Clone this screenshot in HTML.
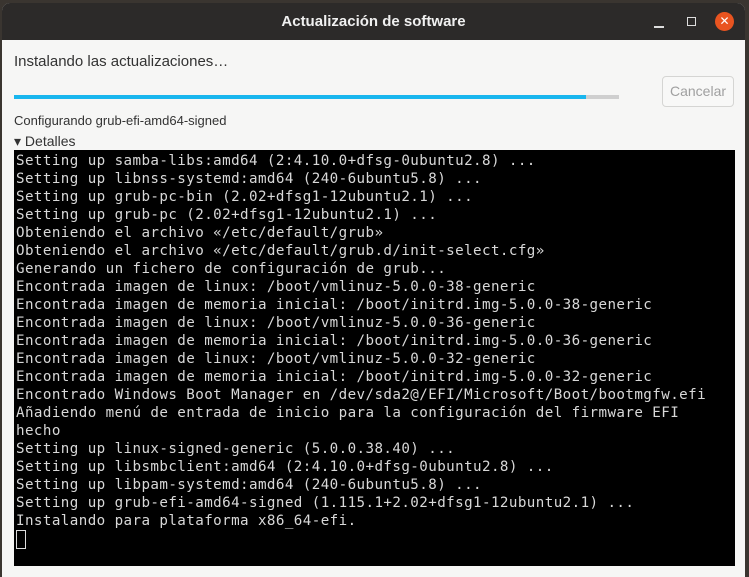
<!DOCTYPE html>
<html><head><meta charset="utf-8"><style>
*{margin:0;padding:0;box-sizing:border-box}
body{width:749px;height:577px;background:#3a3530;position:relative;overflow:hidden;font-family:"Liberation Sans","DejaVu Sans",sans-serif}
.win{position:absolute;left:2px;top:3px;width:743px;height:574px;background:#f6f6f5;border-radius:8px 8px 0 0;overflow:hidden}
.tb{height:37px;background:#2c2a29;color:#f0f0f0;font-weight:bold;font-size:15px;text-align:center;line-height:37px}
.close{position:absolute;left:713px;top:9px;width:19px;height:19px;border-radius:50%;background:#e95420;color:#fff;font-size:12px;line-height:19px;text-align:center;font-weight:normal}
.t1{position:absolute;left:12px;top:50px;font-size:15px;color:#333}
.bar{position:absolute;left:12px;top:92px;width:605px;height:4px;background:#cfcfcf}
.bar div{width:572px;height:4px;background:#19b6ee}
.btn{position:absolute;left:660px;top:73px;width:72px;height:31px;border:1px solid #d5d5d3;border-radius:4px;color:#a0a0a0;font-size:14px;text-align:center;line-height:29px;background:#f8f8f7}
.t2{position:absolute;left:12px;top:110px;font-size:13px;color:#333}
.t3{position:absolute;left:12px;top:130px;font-size:14px;color:#333}
.term{position:absolute;left:12px;top:147px;width:721px;height:416px;background:#000;color:#d8d8d8;font-family:"DejaVu Sans Mono","Liberation Mono",monospace;font-size:14.2px;line-height:18px;padding:2px 0 0 2px;white-space:pre;letter-spacing:0.42px}
.cur{display:inline-block;width:10px;height:19px;border:1px solid #ddd;vertical-align:top}
</style></head><body>
<div class="win">
<div class="tb">Actualización de software</div>
<div style="position:absolute;left:652px;top:23px;width:10px;height:1.5px;background:#ddd"></div>
<div style="position:absolute;left:685px;top:14px;width:9px;height:9px;border:1.5px solid #ddd"></div>
<div class="close">✕</div>
<div class="t1">Instalando las actualizaciones…</div>
<div class="bar"><div></div></div>
<div class="btn">Cancelar</div>
<div class="t2">Configurando grub-efi-amd64-signed</div>
<div class="t3">▾ Detalles</div>
<div class="term">Setting up samba-libs:amd64 (2:4.10.0+dfsg-0ubuntu2.8) ...
Setting up libnss-systemd:amd64 (240-6ubuntu5.8) ...
Setting up grub-pc-bin (2.02+dfsg1-12ubuntu2.1) ...
Setting up grub-pc (2.02+dfsg1-12ubuntu2.1) ...
Obteniendo el archivo «/etc/default/grub»
Obteniendo el archivo «/etc/default/grub.d/init-select.cfg»
Generando un fichero de configuración de grub...
Encontrada imagen de linux: /boot/vmlinuz-5.0.0-38-generic
Encontrada imagen de memoria inicial: /boot/initrd.img-5.0.0-38-generic
Encontrada imagen de linux: /boot/vmlinuz-5.0.0-36-generic
Encontrada imagen de memoria inicial: /boot/initrd.img-5.0.0-36-generic
Encontrada imagen de linux: /boot/vmlinuz-5.0.0-32-generic
Encontrada imagen de memoria inicial: /boot/initrd.img-5.0.0-32-generic
Encontrado Windows Boot Manager en /dev/sda2@/EFI/Microsoft/Boot/bootmgfw.efi
Añadiendo menú de entrada de inicio para la configuración del firmware EFI
hecho
Setting up linux-signed-generic (5.0.0.38.40) ...
Setting up libsmbclient:amd64 (2:4.10.0+dfsg-0ubuntu2.8) ...
Setting up libpam-systemd:amd64 (240-6ubuntu5.8) ...
Setting up grub-efi-amd64-signed (1.115.1+2.02+dfsg1-12ubuntu2.1) ...
Instalando para plataforma x86_64-efi.
<span class="cur"></span></div>
</div>
</body></html>
